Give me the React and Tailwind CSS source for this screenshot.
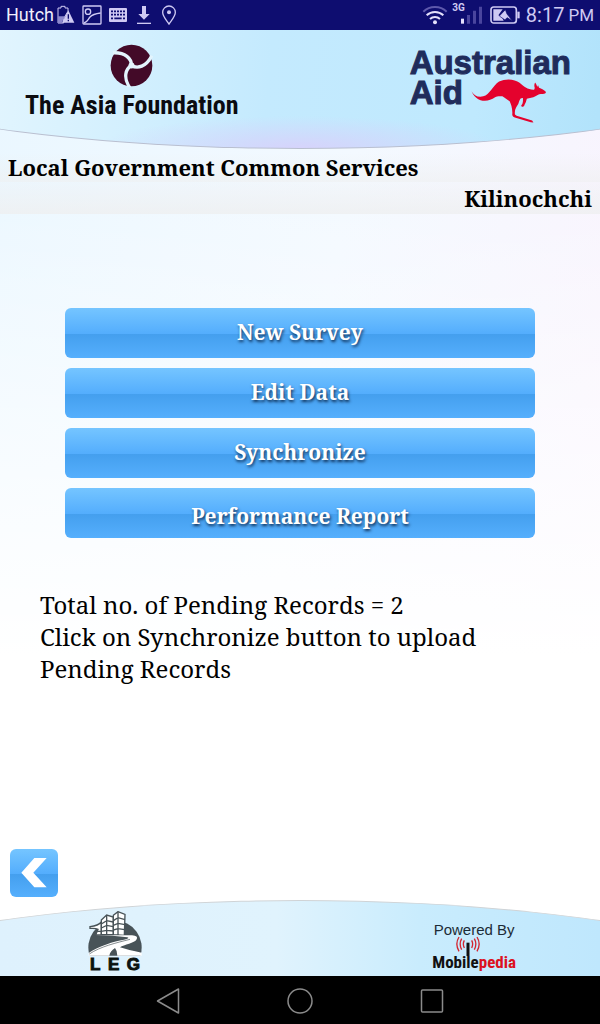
import React from "react";

const menuItems = [
  { label: "New Survey", className: "" },
  { label: "Edit Data", className: "" },
  { label: "Synchronize", className: "" },
  { label: "Performance Report", className: "pt-2" },
];

const StatusBar = () => (
  <div className="flex h-[30px] items-center justify-between bg-[#0e0d70] pl-1.5 pr-1.5 font-['Roboto',sans-serif] text-[#cfcaf3]">
    <div className="flex items-center gap-[7px]">
      <span className="-mr-1 text-[18px] leading-6 text-[#f1effc]">Hutch</span>
      <svg className="h-5 w-[18px]" viewBox="0 0 54 60">
        <path d="M3 9h9V4h12v5h9v10L20 40v14H3z" fill="none" stroke="#cfcaf3" strokeWidth="3" />
        <path d="M3 34h20L14 55H3z" fill="#8d88cc" />
        <path d="M34 16L52 53H15z" fill="#cfcaf3" />
        <path d="M34 28v13M34 44v5" stroke="#0e0d70" strokeWidth="4" />
      </svg>
      <svg className="h-5 w-5" viewBox="0 0 60 60" fill="none" stroke="#cfcaf3" strokeWidth="4">
        <rect x="3" y="3" width="54" height="54" rx="2" />
        <circle cx="18" cy="20" r="8" />
        <path d="M6 54C18 50 17 44 24 36S40 26 56 24" />
      </svg>
      <svg className="h-5 w-[18px]" viewBox="0 0 54 60">
        <rect x="0" y="9" width="54" height="42" rx="3" fill="#cfcaf3" />
        <path d="M6 19h42M6 29h42" stroke="#0e0d70" strokeWidth="5" strokeDasharray="6 3" />
        <path d="M6 40h6M16 40h22M42 40h6" stroke="#0e0d70" strokeWidth="5" />
      </svg>
      <svg className="ml-0.5 h-5 w-4" viewBox="0 0 48 60" fill="#cfcaf3">
        <path d="M18 3h12v24h11L24 44 7 27h11z" />
        <path d="M3 53h42v4H3z" />
      </svg>
      <svg className="ml-0.5 h-5 w-4" viewBox="0 0 48 60">
        <path d="M24 57C14 43 5 34 5 22a19 19 0 0 1 38 0c0 12-9 21-19 35z" fill="none" stroke="#cfcaf3" strokeWidth="4" />
        <circle cx="24" cy="22" r="6" fill="#cfcaf3" />
      </svg>
    </div>
    <div className="flex items-center">
      <svg className="h-5 w-[26px]" viewBox="0 0 78 60" fill="none" strokeWidth="6">
        <path d="M4 20a50 50 0 0 1 70 0" stroke="#5e59ac" />
        <path d="M14 31a36 36 0 0 1 50 0M24 42a22 22 0 0 1 30 0" stroke="#e4e0fb" />
        <circle cx="39" cy="52" r="6" fill="#e4e0fb" />
      </svg>
      <div className="ml-1 flex h-[26px] items-start">
        <span className="text-[10px] font-bold leading-3">3G</span>
        <svg className="-ml-1 mt-1 h-[18px] w-[21px]" viewBox="0 0 63 54">
          <path d="M0 38h9v15H0z" fill="#e4e0fb" />
          <path d="M18 27h9v26h-9zM36 14h9v39h-9zM54 2h9v51h-9z" fill="#4a459e" />
        </svg>
      </div>
      <svg className="ml-2 h-5 w-[30px]" viewBox="0 0 90 60">
        <rect x="3" y="6" width="76" height="48" rx="8" fill="none" stroke="#cfcaf3" strokeWidth="5" />
        <path d="M82 20h7v20h-7z" fill="#cfcaf3" />
        <path d="M10 13h28L25 31l10 4 6 12H10z" fill="#cfcaf3" />
        <path d="M28 33l18-19 5 13 16 20-16-9-6 7z" fill="#cfcaf3" stroke="#0e0d70" strokeWidth="2" />
      </svg>
      <span className="ml-1.5 text-[20px] leading-6">8:17</span>
      <span className="ml-1 text-[17px] leading-6">PM</span>
    </div>
  </div>
);

const AsiaFoundationLogo = () => (
  <div className="flex flex-col items-center">
    <svg className="h-[43px] w-[43px]" viewBox="-65 -65 130 130">
      <circle r="63" fill="#430a28" />
      <g fill="none" stroke="#e3f4fd" strokeWidth="10">
        <path d="M0 0C-18 10-26 36-5 68" />
        <path d="M0 0C-18 10-26 36-5 68" transform="rotate(120)" />
        <path d="M0 0C-18 10-26 36-5 68" transform="rotate(240)" />
      </g>
      <circle r="9" fill="#e3f4fd" />
    </svg>
    <span className="mt-1 whitespace-nowrap font-['Liberation_Sans_Narrow','Roboto_Condensed','DejaVu_Sans_Condensed',sans-serif] text-[26px] font-bold leading-7 text-[#0b0b10]">
      The Asia Foundation
    </span>
  </div>
);

const AustralianAidLogo = () => (
  <div className="font-['Liberation_Sans',sans-serif] text-[33px] font-bold leading-[30px] text-[#1f2c5c] [-webkit-text-stroke:1px_#1f2c5c]">
    <div>Australian</div>
    <div className="flex items-start gap-2">
      <span>Aid</span>
      <svg className="h-[46px] w-[76px]" viewBox="205 112 230 138" fill="#e4022d">
        <path d="M207 152C213 163 225 171 242 167C262 162 270 135 290 122C310 112 338 114 352 126C364 137 378 148 396 147L398 142C396 137 396 130 399 125C403 130 405 135 405 139L408 133L411 141C418 143 428 148 432 154C431 160 424 160 416 160C410 161 406 163 400 167C392 172 382 172 374 174C372 182 370 188 367 192C366 197 362 200 358 198L357 194C362 190 363 180 362 172C353 170 352 180 348 190C342 200 336 206 338 222L343 226L390 240L394 246L386 245L340 232C332 230 329 226 330 220C331 205 326 190 322 182C314 178 308 172 300 167C290 166 284 166 278 170C266 178 254 182 240 180C224 177 212 165 207 152Z" />
      </svg>
    </div>
  </div>
);

const LegLogo = () => (
  <div className="flex flex-col items-center">
    <svg className="h-[45px] w-[54px]" viewBox="264 211 162 135">
      <path d="M269 345A80 80 0 1 1 421 345Z" fill="#485358" />
      {/* buildings */}
      <g fill="#fff" stroke="#485358" strokeWidth="4">
        <path d="M270 258C286 256 296 254 304 244V283H287L294 266C286 262 278 264 270 263Z" />
        <path d="M304 238L320 223L340 229V282H304Z" />
        <path d="M340 224L354 213L375 221L373 284L340 282Z" />
        <path d="M320 223V282M354 213V283M304 250L320 240L340 244M304 262L320 254L340 258M304 272L320 269L340 271M340 240L354 231L375 237M340 254L354 248L375 252M340 268L354 264L374 267M288 272H304" fill="none" />
      </g>
      {/* road */}
      <path d="M286 284H396Q416 286 410 296C404 308 372 312 360 320Q384 328 425 336V345H352Q352 330 345 322Q330 332 328 345H266V337C296 316 342 302 372 297Q392 293 382 290Q340 284 286 284Z" fill="#fff" />
      <path d="M268 340C300 318 350 306 390 296M372 318Q396 328 424 331" fill="none" stroke="#485358" strokeWidth="2" />
    </svg>
    <span className="flex w-[50px] justify-between font-['Liberation_Sans',sans-serif] text-[17px] font-bold leading-[18px] text-[#0b1210] [-webkit-text-stroke:1px_#0b1210]">
      <span>L</span>
      <span>E</span>
      <span>G</span>
    </span>
  </div>
);

const MobilepediaLogo = () => (
  <div className="flex flex-col items-center">
    <span className="font-['Liberation_Sans',sans-serif] text-[15px] leading-4 text-[#1c2b36]">Powered By</span>
    <div className="relative pt-3.5">
      <svg className="absolute -top-0.5 left-6 h-5 w-6" viewBox="0 0 72 60" fill="none">
        <path d="M36 20V60" stroke="#111" strokeWidth="9" />
        <g stroke="#d3252f" strokeWidth="4">
          <path d="M9 3Q-4 24 9 46M17 8Q8 24 17 41M25 13Q19 24 25 36" />
          <path d="M63 3Q76 24 63 46M55 8Q64 24 55 41M47 13Q53 24 47 36" />
        </g>
      </svg>
      <span className="block font-['Liberation_Sans_Narrow','Roboto_Condensed','DejaVu_Sans_Condensed',sans-serif] text-[17px] font-bold leading-5 text-[#111]">
        Mobile<span className="text-[#dc1020]">pedia</span>
      </span>
    </div>
  </div>
);

const NavBar = () => (
  <nav className="flex h-12 items-center justify-center gap-[106px] bg-black pt-0.5">
    <button type="button" aria-label="Back">
      <svg className="h-[26px] w-[26px]" viewBox="0 0 26 26" fill="none" stroke="#8b8b8b" strokeWidth="1.5" strokeLinejoin="round">
        <path d="M23.5 1v24L2.5 13z" />
      </svg>
    </button>
    <button type="button" aria-label="Home">
      <svg className="h-[26px] w-[26px]" viewBox="0 0 26 26" fill="none" stroke="#8b8b8b" strokeWidth="1.5">
        <circle cx="13" cy="13" r="12" />
      </svg>
    </button>
    <button type="button" aria-label="Recent apps">
      <svg className="h-[26px] w-[26px]" viewBox="0 0 26 26" fill="none" stroke="#8b8b8b" strokeWidth="1.5">
        <rect x="2.5" y="2" width="21" height="22" rx="1" />
      </svg>
    </button>
  </nav>
);

export default function App() {
  return (
    <div className="flex min-h-screen flex-col bg-white font-['Noto_Serif','Droid_Serif','DejaVu_Serif_Condensed','DejaVu_Serif',serif] text-black">
      <StatusBar />

      <div className="flex flex-1 flex-col bg-[linear-gradient(180deg,rgba(255,255,255,0)_15%,#ffffff_72%),linear-gradient(100deg,#eaf7ff_0%,#f3f9ff_50%,#faf2fd_100%)]">
        <header className="relative h-[119px] overflow-hidden">
          <div className="absolute bottom-0 left-[-50%] h-[290px] w-[200%] rounded-[50%] border-b border-[#b9bfd0] bg-[radial-gradient(ellipse_17%_32px_at_50%_100%,#d6d3fb_0%,rgba(217,213,251,0)_100%),linear-gradient(95deg,#e2f5fe_25%,#c4eafe_48%,#bfe9fe_65%,#b2e3fb_75%)]" />
          <div className="relative flex justify-between pl-[25px] pr-[29px] pt-3.5">
            <AsiaFoundationLogo />
            <div className="pt-1">
              <AustralianAidLogo />
            </div>
          </div>
        </header>

        <div className="mt-1 text-[22px] font-bold">
          <h1 className="bg-linear-to-b from-transparent to-[#eeefef]/60 px-2 leading-[29px]">
            Local Government Common Services
          </h1>
          <h2 className="bg-linear-to-b from-[#eeeff0]/20 to-[#eeeff0]/80 px-2 text-right leading-8">Kilinochchi</h2>
        </div>

        <main className="flex flex-1 flex-col">
          <div className="mt-[94px] flex flex-col gap-2.5 px-[65px]">
            {menuItems.map((item) => (
              <button
                key={item.label}
                type="button"
                className={`h-[50px] rounded-md bg-[linear-gradient(180deg,#75c5ff_0%,#53adfd_52%,#449fee_52%,#55affd_100%)] text-[21px] font-bold text-white text-shadow-[1px_2px_3px_rgba(0,20,50,0.8)] ${item.className}`}
              >
                {item.label}
              </button>
            ))}
          </div>

          <p className="mt-[51px] px-10 text-[24px] leading-8">
            Total no. of Pending Records = 2
            <br />
            Click on Synchronize button to upload Pending Records
          </p>

          <div className="mt-auto px-2.5 pb-[3px]">
            <button
              type="button"
              aria-label="Go back"
              className="flex h-12 w-12 items-center justify-center rounded-md bg-[linear-gradient(180deg,#75c5ff_0%,#53adfd_52%,#449fee_52%,#55affd_100%)]"
            >
              <svg className="h-[30px] w-[26px]" viewBox="0 0 78 90">
                <path d="M40 0H77L37 44L77 88H40L1 44Z" fill="#fff" />
              </svg>
            </button>
          </div>
        </main>
      </div>

      <footer className="relative h-[76px] overflow-hidden">
        <div className="absolute left-[-50%] top-0 h-[300px] w-[200%] rounded-[50%] border-t border-[#cfd3d6] bg-[linear-gradient(90deg,#def1fd_25%,#e0f3fd_48%,#c9ecfd_60%,#bfe7fd_75%)]" />
        <div className="relative flex justify-between pl-[88px] pr-[84px] pt-[11px]">
          <LegLogo />
          <div className="pt-[11px]">
            <MobilepediaLogo />
          </div>
        </div>
      </footer>

      <NavBar />
    </div>
  );
}
